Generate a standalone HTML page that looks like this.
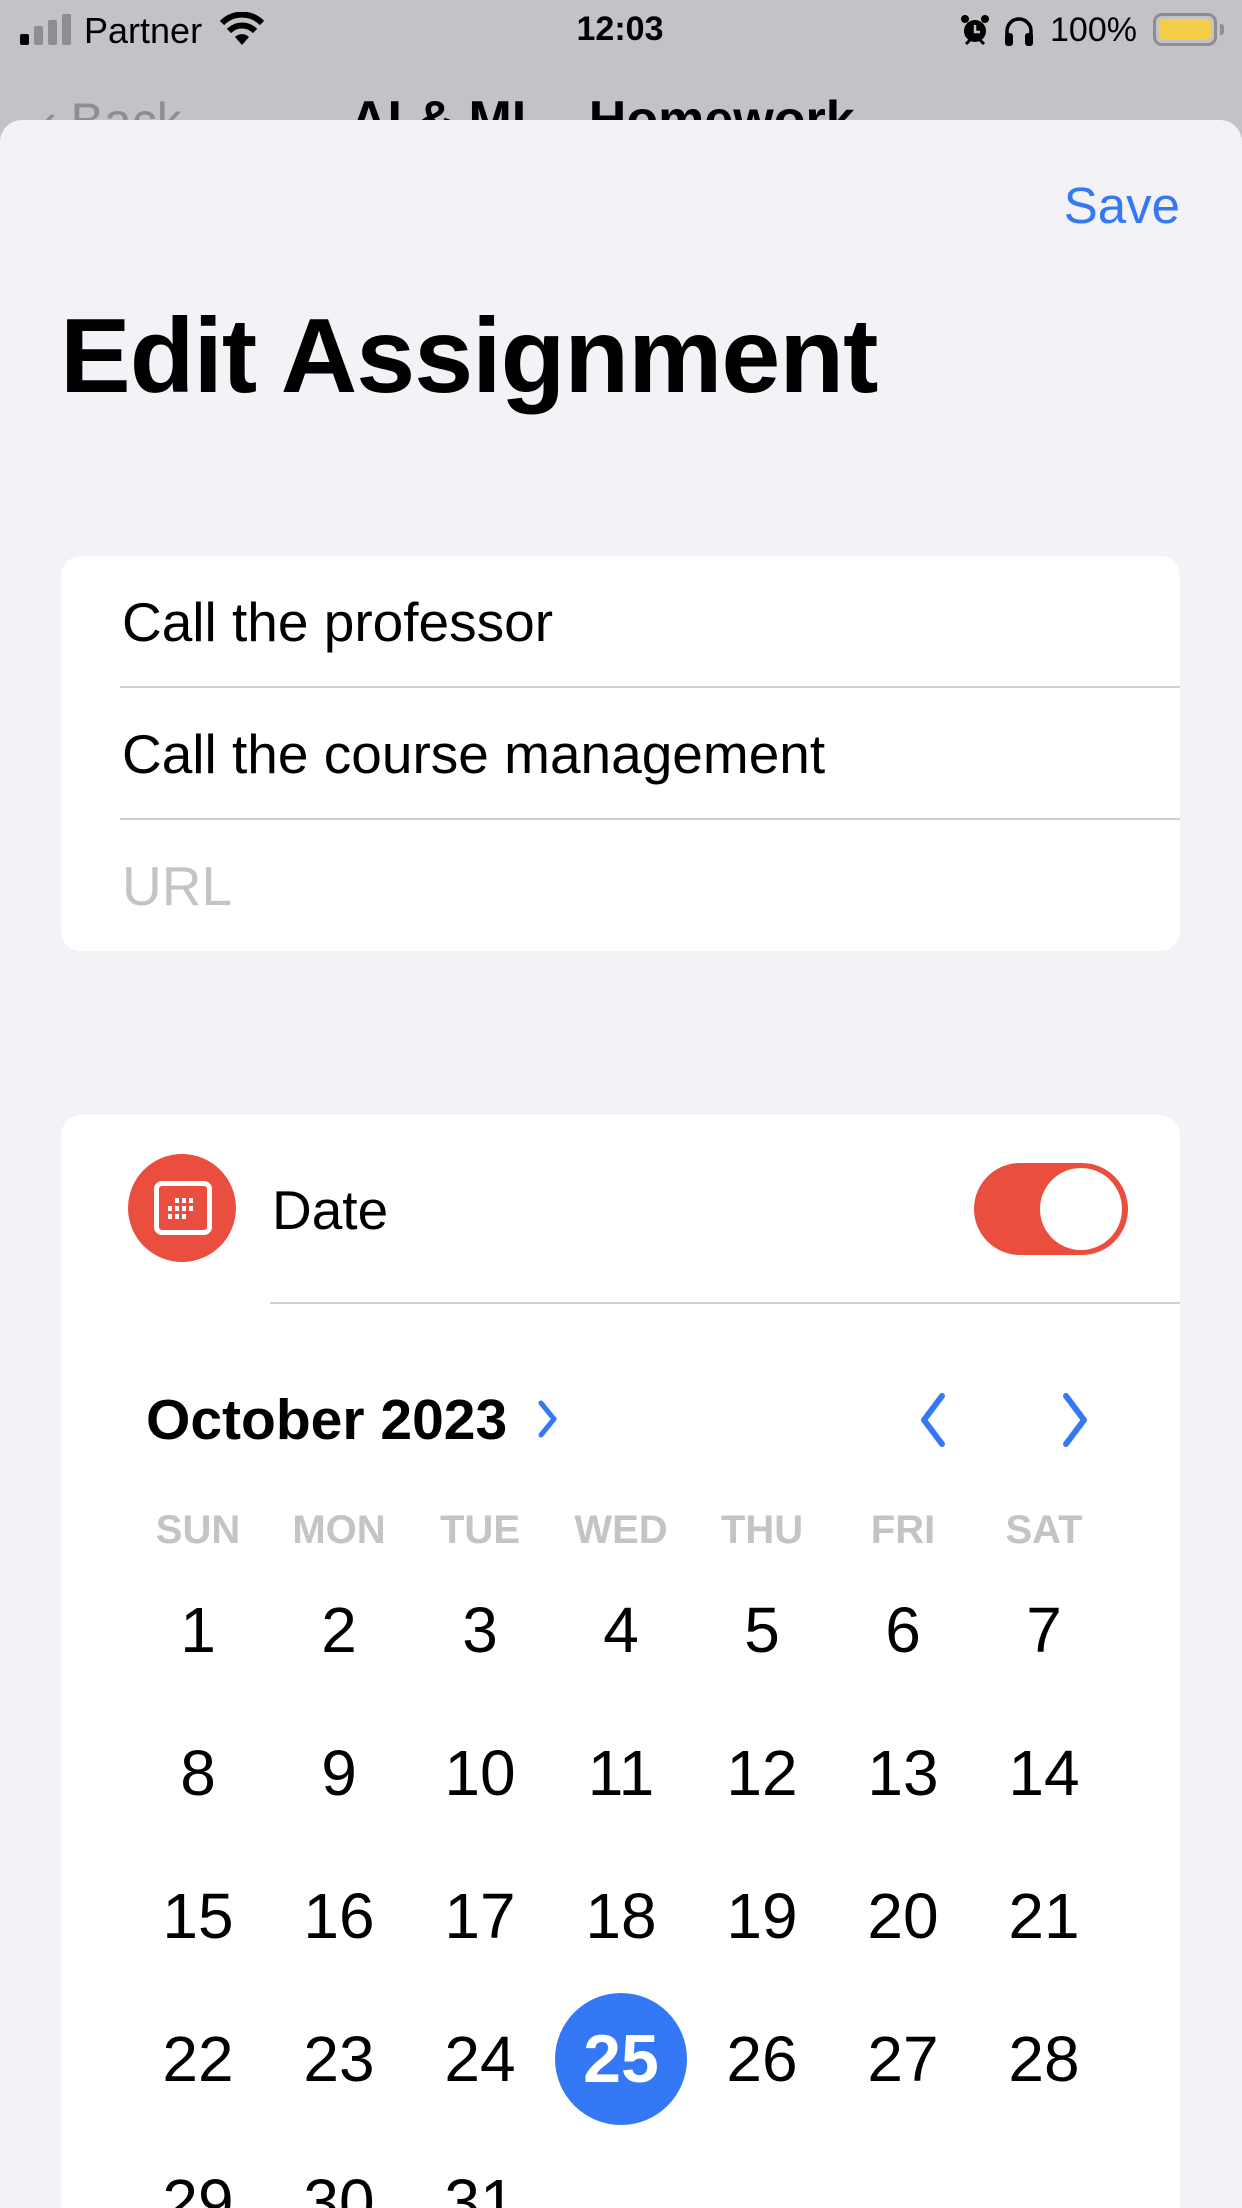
<!DOCTYPE html>
<html><head><meta charset="utf-8"><style>
*{margin:0;padding:0;box-sizing:border-box}
html,body{width:1242px;height:2208px;overflow:hidden}
body{background:#c3c2c7;font-family:"Liberation Sans",sans-serif}
#w{position:relative;width:1242px;height:2208px;overflow:hidden}
.a{position:absolute;white-space:nowrap}
.sheet{position:absolute;left:0;top:120px;width:1242px;height:2088px;background:#f2f2f7;border-radius:22px 22px 0 0}
.card{position:absolute;background:#fff;border-radius:20px}
.sep{position:absolute;height:2px;background:#d1d1d6}
.wd{position:absolute;top:1508px;width:140px;text-align:center;font-size:40px;font-weight:bold;color:#c4c4c6;margin-left:-70px}
.d{position:absolute;width:140px;margin-left:-70px;text-align:center;font-size:64px;color:#000;line-height:64px}
</style></head><body><div id="w">
<div class="a" style="left:20px;top:34px;width:9px;height:11px;background:#000;border-radius:2px"></div>
<div class="a" style="left:34px;top:26px;width:9px;height:19px;background:#8e8e92;border-radius:2px"></div>
<div class="a" style="left:48px;top:20px;width:9px;height:25px;background:#8e8e92;border-radius:2px"></div>
<div class="a" style="left:62px;top:14px;width:9px;height:31px;background:#8e8e92;border-radius:2px"></div>
<div class="a" style="left:84px;top:10px;font-size:36px;color:#000">Partner</div>
<svg class="a" style="left:218px;top:12px" width="48" height="34" viewBox="0 0 48 34"><path d="M24 33 L17 25 A10 10 0 0 1 31 25 Z" fill="#000"/><path d="M11 19 A18 18 0 0 1 37 19" stroke="#000" stroke-width="6" fill="none"/><path d="M4 11 A28 28 0 0 1 44 11" stroke="#000" stroke-width="6" fill="none"/></svg>
<div class="a" style="left:560px;top:10px;width:120px;text-align:center;font-size:34px;font-weight:bold">12:03</div>
<svg class="a" style="left:960px;top:14px" width="30" height="32" viewBox="0 0 30 32"><circle cx="15" cy="17" r="11" fill="#000"/><path d="M15 11v7h5" stroke="#c3c2c7" stroke-width="2.5" fill="none"/><circle cx="5" cy="5" r="4" fill="#000"/><circle cx="25" cy="5" r="4" fill="#000"/><path d="M6 30l4-4M24 30l-4-4" stroke="#000" stroke-width="3"/></svg>
<svg class="a" style="left:1003px;top:15px" width="32" height="32" viewBox="0 0 32 32"><path d="M4 26 V16 A12 12 0 0 1 28 16 V26" stroke="#000" stroke-width="3.5" fill="none"/><rect x="2" y="18" width="8" height="13" rx="3" fill="#000"/><rect x="22" y="18" width="8" height="13" rx="3" fill="#000"/></svg>
<div class="a" style="left:1050px;top:11px;font-size:34px">100%</div>
<div class="a" style="left:1153px;top:13px;width:64px;height:33px;border:3px solid #8e8e92;border-radius:9px;padding:3px"><div style="width:100%;height:100%;background:#f5cd46;border-radius:5px"></div></div>
<div class="a" style="left:1220px;top:24px;width:4px;height:11px;background:#8e8e92;border-radius:0 3px 3px 0"></div>
<div class="a" style="left:40px;top:92px;font-size:50px;color:#8e8e92">‹ Back</div>
<div class="a" style="left:350px;top:90px;font-size:52px;font-weight:bold;color:#000">AI &amp; ML - Homework</div>
<div class="sheet"></div>
<div class="a" style="right:62px;top:176px;font-size:51px;color:#3478f6">Save</div>
<div class="a" style="left:60px;top:296px;font-size:106px;font-weight:bold;letter-spacing:-1px;color:#000">Edit Assignment</div>
<div class="card" style="left:61px;top:556px;width:1119px;height:395px"></div>
<div class="a" style="left:122px;top:590px;font-size:55px">Call the professor</div>
<div class="sep" style="left:120px;top:686px;width:1060px"></div>
<div class="a" style="left:122px;top:722px;font-size:55px">Call the course management</div>
<div class="sep" style="left:120px;top:818px;width:1060px"></div>
<div class="a" style="left:122px;top:854px;font-size:55px;color:#c4c4c6">URL</div>
<div class="card" style="left:61px;top:1115px;width:1119px;height:1093px;border-radius:20px 20px 0 0"></div>
<div class="a" style="left:128px;top:1154px;width:108px;height:108px;border-radius:50%;background:#e94e3e"></div>
<div class="a" style="left:154px;top:1181px;width:58px;height:54px;border:5px solid #fff;border-radius:8px;background:#e94e3e"></div>
<svg class="a" style="left:163px;top:1194px" width="40" height="32" viewBox="0 0 40 32"><g fill="#fff"><rect x="12" y="4" width="4" height="5"/><rect x="19" y="4" width="4" height="5"/><rect x="26" y="4" width="4" height="5"/><rect x="5" y="12" width="4" height="5"/><rect x="12" y="12" width="4" height="5"/><rect x="19" y="12" width="4" height="5"/><rect x="26" y="12" width="4" height="5"/><rect x="5" y="20" width="4" height="5"/><rect x="12" y="20" width="4" height="5"/><rect x="19" y="20" width="4" height="5"/></g></svg>
<div class="a" style="left:272px;top:1178px;font-size:55px">Date</div>
<div class="a" style="left:974px;top:1163px;width:154px;height:92px;border-radius:46px;background:#e94e3e"></div>
<div class="a" style="left:1040px;top:1168px;width:82px;height:82px;border-radius:50%;background:#fff"></div>
<div class="sep" style="left:270px;top:1302px;width:910px"></div>
<div class="a" style="left:146px;top:1387px;font-size:57px;font-weight:bold">October 2023</div>
<svg class="a" style="left:536px;top:1398px" width="24" height="42" viewBox="0 0 24 42"><path d="M5 5 L18 21 L5 37" stroke="#3478f6" stroke-width="5" fill="none" stroke-linecap="round" stroke-linejoin="round"/></svg>
<svg class="a" style="left:912px;top:1390px" width="40" height="60" viewBox="0 0 40 60"><path d="M30 6 L12 30 L30 54" stroke="#3478f6" stroke-width="6" fill="none" stroke-linecap="round" stroke-linejoin="round"/></svg>
<svg class="a" style="left:1056px;top:1390px" width="40" height="60" viewBox="0 0 40 60"><path d="M10 6 L28 30 L10 54" stroke="#3478f6" stroke-width="6" fill="none" stroke-linecap="round" stroke-linejoin="round"/></svg>
<div class="wd" style="left:198px">SUN</div><div class="wd" style="left:339px">MON</div><div class="wd" style="left:480px">TUE</div><div class="wd" style="left:621px">WED</div><div class="wd" style="left:762px">THU</div><div class="wd" style="left:903px">FRI</div><div class="wd" style="left:1044px">SAT</div>
<div class="a" style="left:555px;top:1993px;width:132px;height:132px;border-radius:50%;background:#3478f6"></div>
<div id="days"></div>
</div>
<script>
var xs=[198,339,480,621,762,903,1044],ys=[1630,1773,1916,2059,2202],h='';
for(var n=1;n<=31;n++){var i=(n-1)%7,r=Math.floor((n-1)/7);
h+='<div class="d" style="left:'+xs[i]+'px;top:'+(ys[r]-32)+'px;'+(n==25?'color:#fff;font-weight:bold;font-size:68px':'')+'">'+n+'</div>';}
document.getElementById('days').innerHTML=h;
</script>
</body></html>
